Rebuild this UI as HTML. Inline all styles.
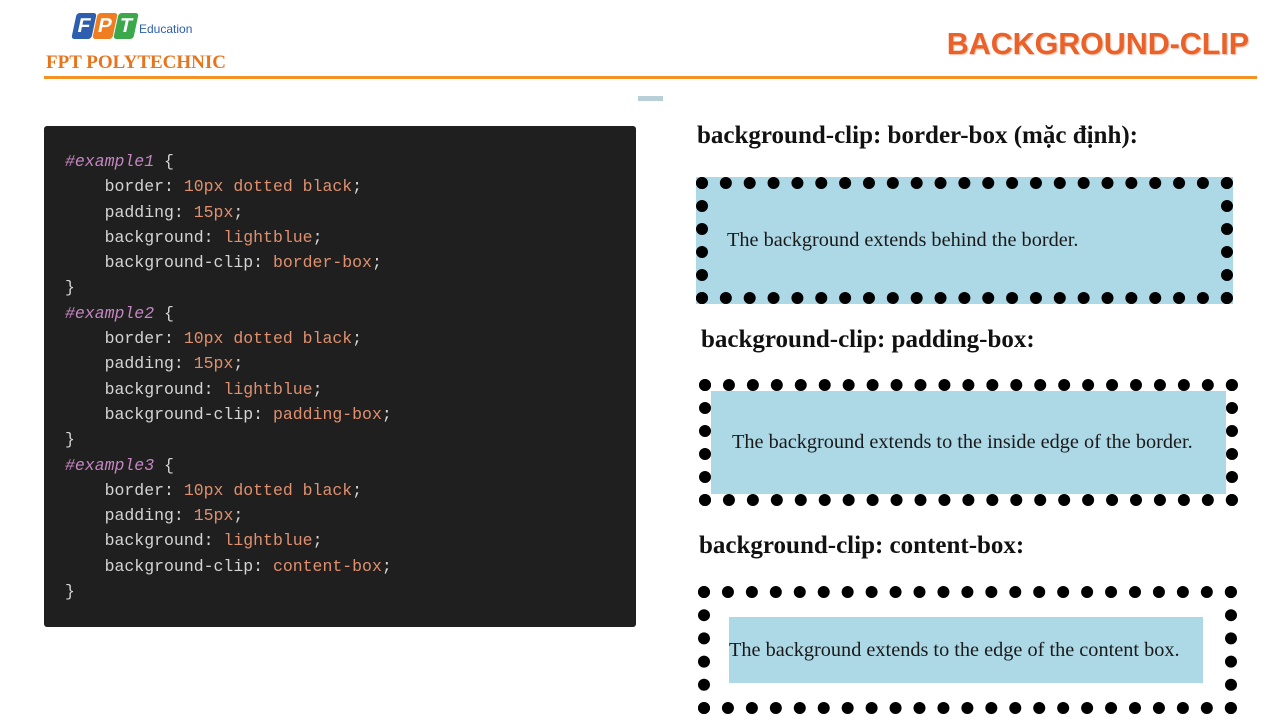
<!DOCTYPE html>
<html><head><meta charset="utf-8"><style>
body{margin:0;width:1283px;height:726px;background:#fff;position:relative;overflow:hidden;font-family:"Liberation Serif",serif}
.abs{position:absolute}
.logo span{display:inline-block;width:20px;height:26px;transform:skewX(-12deg);color:#fff;font:bold 20px "Liberation Sans",sans-serif;text-align:center;line-height:26px;border-radius:3px;margin-right:1px}
.code{left:44px;top:126px;width:592px;height:501px;background:#1f1f1f;border-radius:3px;font-family:"Liberation Mono",monospace;font-size:16.5px;line-height:25.3px;color:#d4d4d4;white-space:pre;box-sizing:border-box;padding:23px 0 0 21px}
.sel{color:#c586c0;font-style:italic}.v{color:#e0906e}
h3{position:absolute;margin:0;font:bold 25px "Liberation Serif",serif;color:#111}
.box{position:absolute;border:12px dotted #000;box-sizing:border-box;font:20.3px "Liberation Serif",serif;color:#1a1a1a;display:flex;align-items:center}
</style></head><body>
<div class="abs logo" style="left:74px;top:13px"><span style="background:#2d5fae">F</span><span style="background:#ef7d22">P</span><span style="background:#3ba94b">T</span></div>
<div class="abs" style="left:139px;top:22px;font:12px 'Liberation Sans',sans-serif;color:#2d5fae">Education</div>
<div class="abs" style="left:46px;top:52px;font:bold 19px 'Liberation Serif',serif;color:#e8741e">FPT POLYTECHNIC</div>
<div class="abs" style="right:34px;top:27px;font:bold 30.4px 'Liberation Sans',sans-serif;color:#e8622a;text-shadow:1px 1px 1px #f2b8a0">BACKGROUND-CLIP</div>
<div class="abs" style="left:44px;top:76px;width:1213px;height:3px;background:#f39325"></div>
<div class="abs" style="left:638px;top:96px;width:25px;height:5px;background:#b8cfd8"></div>
<div class="abs code"><span class="sel">#example1</span> {
    border: <span class="v">10px dotted black</span>;
    padding: <span class="v">15px</span>;
    background: <span class="v">lightblue</span>;
    background-clip: <span class="v">border-box</span>;
}
<span class="sel">#example2</span> {
    border: <span class="v">10px dotted black</span>;
    padding: <span class="v">15px</span>;
    background: <span class="v">lightblue</span>;
    background-clip: <span class="v">padding-box</span>;
}
<span class="sel">#example3</span> {
    border: <span class="v">10px dotted black</span>;
    padding: <span class="v">15px</span>;
    background: <span class="v">lightblue</span>;
    background-clip: <span class="v">content-box</span>;
}</div>
<h3 style="left:697px;top:122px">background-clip: border-box (mặc định):</h3>
<div class="box" style="left:696px;top:177px;width:537px;height:127px;background:#add8e6;padding-left:19px">The background extends behind the border.</div>
<h3 style="left:701px;top:326px">background-clip: padding-box:</h3>
<div class="box" style="left:699px;top:379px;width:539px;height:127px;background:#add8e6;background-clip:padding-box;padding-left:21px">The background extends to the inside edge of the border.</div>
<h3 style="left:699px;top:532px">background-clip: content-box:</h3>
<div class="box" style="left:698px;top:586px;width:539px;height:128px;background:#add8e6;background-clip:content-box;padding:19px 22px 19px 19px">The background extends to the edge of the content box.</div>
</body></html>
